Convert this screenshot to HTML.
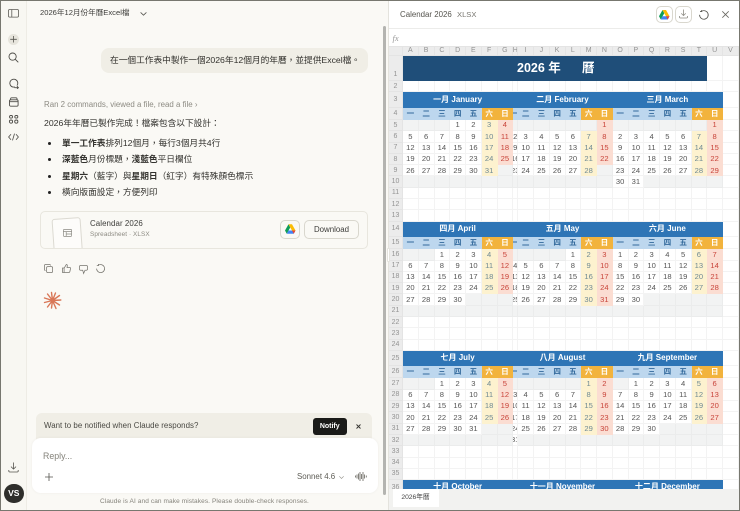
<!DOCTYPE html>
<html lang="zh-Hant"><head><meta charset="utf-8"><title>Calendar 2026</title>
<style>
*{box-sizing:border-box}
html,body{margin:0;padding:0}
body{width:740px;height:511px;overflow:hidden;position:relative;background:#faf9f5;font-family:"Liberation Sans","Noto Sans CJK TC",sans-serif;color:#3d3d3a}
.a{position:absolute;white-space:nowrap}
svg{position:absolute;overflow:visible}
#side{position:absolute;left:0;top:0;width:27px;height:511px;background:#f8f7f2;border-right:1px solid #eeece5}
.li{font-size:8.7px;line-height:12px;color:#33322e}
.li b{font-weight:700}
.dot{position:absolute;left:48px;width:3px;height:3px;border-radius:50%;background:#222}
.btn{position:absolute;border:1px solid #d9d7ce;border-radius:5px;background:#faf9f5}
#rp{position:absolute;left:389px;top:0;width:351px;height:511px;background:#fff}
#g{position:absolute;left:389px;top:46.7px;width:350px;height:443px;overflow:hidden;display:grid;
grid-template-columns:14px repeat(7,15.76px) 5px repeat(13,15.76px) 1fr;
grid-template-rows:9.3px 25px 11.5px 15.8px 11.7px repeat(9,11.3px) 15.4px 12.2px repeat(9,11.3px) 15.4px 12.2px repeat(9,11.3px) 15.4px;
font-size:7.6px;color:#555;background:#fff}
#g i{font-style:normal;display:flex;align-items:center;justify-content:center;overflow:hidden;border-right:1px solid #f3f3f3;border-bottom:1px solid #f3f3f3;white-space:nowrap;min-width:0;line-height:1}
#g i.r{background:#ececec;color:#939393;font-size:7px;border-color:#e4e4e4}
#g i.e{background:#f2f3f3;border-color:#ebecec}
#g i.s{background:#fdf2cf;color:#6f8a93;border-color:#fdf2cf}
#g i.u{background:#fbddd2;color:#c8443a;border-color:#fbddd2}
#g i.w{background:#bdd7ee;color:#336a9c;font-weight:700;border-color:#bdd7ee}
#g i.o{background:#f2b33d;color:#fff;font-weight:700;border-color:#f2b33d}
#g i.m{grid-column:span 7;background:#2e75b6;color:#fff;font-weight:700;font-size:8px;border-color:#2e75b6}
#g i.t{grid-column:span 20;background:#1f4e79;border-color:#1f4e79;position:relative;color:#fff;font-weight:700;font-size:12.5px}
</style></head><body>

<div id="side"></div>
<div style="position:absolute;left:0;top:0;width:740px;height:511px;border:1px solid #77776f;z-index:50;pointer-events:none"></div>

<!-- sidebar icons -->
<svg style="left:8px;top:9px" width="11" height="9" viewBox="0 0 11 9" fill="none" stroke="#5c5b55" stroke-width=".8"><rect x=".5" y=".5" width="10" height="7.6" rx="1.2"/><path d="M3.8.5v7.6"/></svg>
<div style="position:absolute;left:8px;top:33.5px;width:11px;height:11px;border-radius:50%;background:#e6e4dc"></div>
<svg style="left:10px;top:36px" width="7" height="7" viewBox="0 0 7 7" stroke="#55544e" stroke-width=".8"><path d="M3.5 0v6.5M.2 3.3h6.6"/></svg>
<svg style="left:8px;top:52px" width="11" height="11" viewBox="0 0 11 11" fill="none" stroke="#4d4c47" stroke-width=".9"><circle cx="4.6" cy="4.6" r="3.6"/><path d="M7.3 7.3l3 3"/></svg>
<svg style="left:8px;top:78px" width="11" height="11" viewBox="0 0 11 11" fill="none" stroke="#4d4c47" stroke-width=".9"><path d="M9 7.600A4 4 0 1 0 5 9.100h2"/><path d="M6.500 9.700h3.800M9 8.200l1.400 1.500L9 10.800"/></svg>
<svg style="left:9px;top:97px" width="10" height="10" viewBox="0 0 10 10" fill="none" stroke="#4d4c47" stroke-width=".9"><rect x=".5" y="2.800" width="8.600" height="6.400" rx="1.200"/><path d="M1.600 2.800V1.800q0-1 1-1h4.400q1 0 1 1v1M.5 4.700h8.600"/></svg>
<svg style="left:9px;top:115px" width="10" height="9" viewBox="0 0 10 9" fill="none" stroke="#4d4c47" stroke-width=".9"><rect x=".5" y=".5" width="3" height="2.600" rx="1.200"/><rect x="5.800" y=".5" width="3" height="2.600" rx="1.200"/><circle cx="2" cy="6.600" r="1.600"/><circle cx="7.300" cy="6.600" r="1.600"/></svg>
<svg style="left:8px;top:133px" width="11" height="8" viewBox="0 0 11 8" fill="none" stroke="#4d4c47" stroke-width=".8"><path d="M3 1.200L.6 4 3 6.800M8 1.200L10.400 4 8 6.800M6.500.6L4.500 7.400"/></svg>
<svg style="left:8px;top:462px" width="11" height="11" viewBox="0 0 11 11" fill="none" stroke="#55544e" stroke-width=".8"><path d="M5.500.5v6.400M3 4.600l2.500 2.500L8 4.600M.8 8v1q0 1 1 1h7.400q1 0 1-1V8"/></svg>
<div style="position:absolute;left:4px;top:483.500px;width:19.500px;height:19.500px;border-radius:50%;background:#2e2e2b;color:#fff;font-size:8.500px;font-weight:700;text-align:center;line-height:19.500px">VS</div>

<!-- title -->
<div class="a" style="left:40px;top:7px;font-size:7.600px;line-height:12px;color:#3d3d3a">2026年12月份年曆Excel檔</div>
<svg style="left:139.500px;top:11.500px" width="7" height="4" viewBox="0 0 7 4" fill="none" stroke="#55544e" stroke-width=".8"><path d="M.6.4L3.500 3.200 6.400.4"/></svg>

<!-- user bubble -->
<div style="position:absolute;left:101px;top:48px;width:267px;height:24.500px;background:#f0eee6;border-radius:8px"></div>
<div class="a" style="left:110px;top:54px;font-size:8.700px;line-height:12px;color:#33322e">在一個工作表中製作一個2026年12個月的年曆，並提供Excel檔。</div>

<div class="a" style="left:44px;top:98.500px;font-size:7.900px;line-height:12px;color:#8d8b83">Ran 2 commands, viewed a file, read a file ›</div>
<div class="a li" style="left:44px;top:117px">2026年年曆已製作完成！檔案包含以下設計：</div>
<div class="dot" style="top:141.500px"></div><div class="a li" style="left:62px;top:137px"><b>單一工作表</b>排列12個月，每行3個月共4行</div>
<div class="dot" style="top:157.500px"></div><div class="a li" style="left:62px;top:153px"><b>深藍色</b>月份標題，<b>淺藍色</b>平日欄位</div>
<div class="dot" style="top:174.500px"></div><div class="a li" style="left:62px;top:170px"><b>星期六</b>（藍字）與<b>星期日</b>（紅字）有特殊顏色標示</div>
<div class="dot" style="top:190.500px"></div><div class="a li" style="left:62px;top:186px">橫向版面設定，方便列印</div>

<!-- file card -->
<div style="position:absolute;left:40px;top:210.500px;width:328px;height:38px;border:1px solid #e8e6de;border-radius:5px;overflow:hidden;background:#faf9f5">
<div style="position:absolute;left:12px;top:6px;width:29px;height:44px;background:#fdfcfa;border:1px solid #dcdad2;border-radius:3px;transform:rotate(-4deg)"></div>
<svg style="left:22px;top:17px" width="9" height="8" viewBox="0 0 9 8" fill="none" stroke="#8b8a83" stroke-width=".7"><rect x=".4" y=".4" width="8.200" height="7" rx=".8"/><path d="M.4 2.600h8.200M3.200 2.600v4.800M3.200 5h5.400"/></svg>
</div>
<div class="a" style="left:90px;top:218px;font-size:7.900px;line-height:11px;letter-spacing:.08px;color:#3d3d3a">Calendar 2026</div>
<div class="a" style="left:90px;top:229.500px;font-size:6.400px;line-height:10px;letter-spacing:.08px;color:#8d8b83">Spreadsheet · XLSX</div>
<div class="btn" style="left:280px;top:219.500px;width:20px;height:19.500px"></div>
<svg style="left:285px;top:224px" width="10.500" height="10" viewBox="0 0 21 19"><path d="M7 0L0 12.500 3.500 19l7-12.500z" fill="#0f9d58"/><path d="M7 0h7l7 12.500h-7L10.500 6.500z" fill="#fbbc05"/><path d="M3.500 19h14L21 12.500H7z" fill="#4285f4"/><path d="M14 12.500h7L17.500 19z" fill="#ea4335"/></svg>
<div class="btn" style="left:304px;top:219.500px;width:55px;height:19.500px;text-align:center;font-size:7.900px;line-height:17.500px;color:#3d3d3a">Download</div>

<!-- actions -->
<svg style="left:44px;top:264px" width="9" height="9" viewBox="0 0 9 9" fill="none" stroke="#77766f" stroke-width=".75"><rect x="2.600" y="2.600" width="6" height="6" rx="1.200"/><path d="M6.500 1.500q0-1-1-1H1.500q-1 0-1 1v4q0 1 1 1"/></svg>
<svg style="left:61.500px;top:264px" width="9" height="9" viewBox="0 0 9 9" fill="none" stroke="#77766f" stroke-width=".75"><path d="M.5 4h1.600v4.500H.5zM2.100 4.200L4.300.5q1.200 0 1 1.400L5 3.500h2.700q1 0 .8 1L7.900 7.500q-.2 1-1.200 1H2.100"/></svg>
<svg style="left:79px;top:265px" width="9" height="9" viewBox="0 0 9 9" fill="none" stroke="#77766f" stroke-width=".75"><path d="M1.500.5h5.800q1.200 0 1.200 1.200v2.300q0 1.200-1.200 1.200H6L4.600 8.500 3.700 5.200H1.500Q.5 5.200.5 4V1.700Q.5.500 1.500.500z"/></svg>
<svg style="left:96px;top:264px" width="9" height="9" viewBox="0 0 9 9" fill="none" stroke="#77766f" stroke-width=".75"><path d="M2.300 1.300A4 4 0 1 1 .6 4.600M2.400 0v1.600H.8"/></svg>

<!-- spark -->
<svg style="left:44px;top:292px" width="17" height="17" viewBox="-8.500 -8.500 17 17" stroke="#d97757" stroke-width="1.400" stroke-linecap="round"><path d="M0 0L-1-8M0 0L3-7.500M0 0L7-5M0 0L8.300-.5M0 0L7 4.500M0 0L3.500 8M0 0L-1 7.500M0 0L-5 6.500M0 0L-8 2M0 0L-8-2.500M0 0L-5-6.500"/></svg>

<!-- notify -->
<div style="position:absolute;left:36px;top:413px;width:336px;height:32px;background:#f0eee6;border-radius:6px 6px 0 0"></div>
<div class="a" style="left:44px;top:420px;font-size:7.900px;line-height:12px;letter-spacing:.04px;color:#4a4943">Want to be notified when Claude responds?</div>
<div style="position:absolute;left:312.500px;top:417.500px;width:34.500px;height:17.500px;background:#1a1a18;border-radius:3px;color:#fff;font-size:7px;font-weight:700;text-align:center;line-height:17px">Notify</div>
<svg style="left:356px;top:424px" width="5" height="5" viewBox="0 0 5 5" stroke="#33322e" stroke-width=".9"><path d="M.5.500l4 4M4.500.500l-4 4"/></svg>

<!-- input -->
<div style="position:absolute;left:32px;top:438px;width:346px;height:55px;background:#fff;border-radius:9px;box-shadow:0 0 3px rgba(0,0,0,.05)"></div>
<div class="a" style="left:43px;top:449.500px;font-size:8.800px;line-height:12px;color:#85837b">Reply...</div>
<svg style="left:45px;top:472.500px" width="8" height="8" viewBox="0 0 8 8" stroke="#55544e" stroke-width=".8"><path d="M4 0v8M0 4h8"/></svg>
<div class="a" style="left:297px;top:470.500px;font-size:7.900px;line-height:12px;color:#5e5d56">Sonnet 4.6</div>
<svg style="left:338.500px;top:475.500px" width="5" height="3" viewBox="0 0 5 3" fill="none" stroke="#8d8b83" stroke-width=".6"><path d="M.3.300L2.500 2.500 4.700.300"/></svg>
<svg style="left:355px;top:472px" width="12" height="9" viewBox="0 0 12 9" stroke="#77766f" stroke-width=".9"><path d="M.5 3.500v2M2 2.500v4M3.500 1.500v6M5 0v9M6.500 2v5M8 0v9M9.500 2.500v4M11.300 3.500v2"/></svg>
<div class="a" style="left:100px;top:496.500px;font-size:6.500px;line-height:10px;letter-spacing:.1px;color:#85837b">Claude is AI and can make mistakes. Please double-check responses.</div>

<!-- scrollbar -->
<div style="position:absolute;left:383px;top:26px;width:3px;height:469px;background:#b4b4b0;border-radius:2px"></div>

<!-- right panel -->
<div id="rp"></div>
<div style="position:absolute;left:388px;top:0;width:1px;height:511px;background:#e4e3dd"></div>
<div style="position:absolute;left:389px;top:28px;width:351px;height:1px;background:#ececea"></div>
<div style="position:absolute;left:389px;top:46px;width:351px;height:1px;background:#e4e4e4"></div>
<div class="a" style="left:400px;top:8.500px;font-size:7.900px;line-height:11px;color:#55544e">Calendar 2026</div>
<div class="a" style="left:457px;top:8.500px;font-size:7.600px;line-height:11px;color:#77766f">XLSX</div>
<div class="btn" style="left:655.500px;top:5.500px;width:17px;height:17.500px;background:#fff"></div>
<svg style="left:659px;top:10px" width="10.500" height="9.500" viewBox="0 0 21 19"><path d="M7 0L0 12.500 3.500 19l7-12.500z" fill="#0f9d58"/><path d="M7 0h7l7 12.500h-7L10.500 6.500z" fill="#fbbc05"/><path d="M3.500 19h14L21 12.500H7z" fill="#4285f4"/><path d="M14 12.500h7L17.500 19z" fill="#ea4335"/></svg>
<div class="btn" style="left:674.500px;top:5.500px;width:17px;height:17.500px;background:#fff"></div>
<svg style="left:678.500px;top:9px" width="9" height="10" viewBox="0 0 9 10" fill="none" stroke="#8d8b83" stroke-width=".8"><path d="M4.500.5v6M2.300 4.400l2.200 2.200 2.200-2.200M.5 7v1q0 1 1 1h6q1 0 1-1V7"/></svg>
<svg style="left:699px;top:9.500px" width="9.500" height="9.500" viewBox="0 0 9.500 9.500" fill="none" stroke="#55544e" stroke-width=".85"><path d="M2.600 1.300A4.300 4.300 0 1 1 .6 4.800M2.700 0v1.600H1"/></svg>
<svg style="left:721.500px;top:11px" width="7" height="7" viewBox="0 0 7 7" stroke="#66655f" stroke-width=".75"><path d="M.3.300l6.400 6.400M6.700.300L.3 6.700"/></svg>
<div class="a" style="left:392.500px;top:33px;font-size:8.500px;line-height:10px;font-style:italic;font-family:'Liberation Serif',serif;color:#999">fx</div>

<div id="g">
<i class="r"></i><i class="r">A</i><i class="r">B</i><i class="r">C</i><i class="r">D</i><i class="r">E</i><i class="r">F</i><i class="r">G</i><i class="r">H</i><i class="r">I</i><i class="r">J</i><i class="r">K</i><i class="r">L</i><i class="r">M</i><i class="r">N</i><i class="r">O</i><i class="r">P</i><i class="r">Q</i><i class="r">R</i><i class="r">S</i><i class="r">T</i><i class="r">U</i><i class="r">V</i>
<i class="r" style="align-items:flex-end;padding-bottom:2px">1</i><i class="t"><span class="a" style="left:114px;top:5px;line-height:15px">2026 年</span><span class="a" style="left:179px;top:5px;line-height:15px">曆</span></i><i></i><i></i>
<i class="r">2</i><i></i><i></i><i></i><i></i><i></i><i></i><i></i><i></i><i></i><i></i><i></i><i></i><i></i><i></i><i></i><i></i><i></i><i></i><i></i><i></i><i></i><i></i>
<i class="r">3</i><i class="m">一月 January</i><i class="m">二月 February</i><i class="m">三月 March</i><i></i>
<i class="r">4</i><i class="w">一</i><i class="w">二</i><i class="w">三</i><i class="w">四</i><i class="w">五</i><i class="o">六</i><i class="o">日</i><i class="w">一</i><i class="w">二</i><i class="w">三</i><i class="w">四</i><i class="w">五</i><i class="o">六</i><i class="o">日</i><i class="w">一</i><i class="w">二</i><i class="w">三</i><i class="w">四</i><i class="w">五</i><i class="o">六</i><i class="o">日</i><i></i>
<i class="r">5</i><i class="e"></i><i class="e"></i><i class="e"></i><i>1</i><i>2</i><i class="s">3</i><i class="u">4</i><i class="e"></i><i class="e"></i><i class="e"></i><i class="e"></i><i class="e"></i><i class="e"></i><i class="u">1</i><i class="e"></i><i class="e"></i><i class="e"></i><i class="e"></i><i class="e"></i><i class="e"></i><i class="u">1</i><i></i>
<i class="r">6</i><i>5</i><i>6</i><i>7</i><i>8</i><i>9</i><i class="s">10</i><i class="u">11</i><i>2</i><i>3</i><i>4</i><i>5</i><i>6</i><i class="s">7</i><i class="u">8</i><i>2</i><i>3</i><i>4</i><i>5</i><i>6</i><i class="s">7</i><i class="u">8</i><i></i>
<i class="r">7</i><i>12</i><i>13</i><i>14</i><i>15</i><i>16</i><i class="s">17</i><i class="u">18</i><i>9</i><i>10</i><i>11</i><i>12</i><i>13</i><i class="s">14</i><i class="u">15</i><i>9</i><i>10</i><i>11</i><i>12</i><i>13</i><i class="s">14</i><i class="u">15</i><i></i>
<i class="r">8</i><i>19</i><i>20</i><i>21</i><i>22</i><i>23</i><i class="s">24</i><i class="u">25</i><i>16</i><i>17</i><i>18</i><i>19</i><i>20</i><i class="s">21</i><i class="u">22</i><i>16</i><i>17</i><i>18</i><i>19</i><i>20</i><i class="s">21</i><i class="u">22</i><i></i>
<i class="r">9</i><i>26</i><i>27</i><i>28</i><i>29</i><i>30</i><i class="s">31</i><i class="e"></i><i>23</i><i>24</i><i>25</i><i>26</i><i>27</i><i class="s">28</i><i class="e"></i><i>23</i><i>24</i><i>25</i><i>26</i><i>27</i><i class="s">28</i><i class="u">29</i><i></i>
<i class="r">10</i><i class="e"></i><i class="e"></i><i class="e"></i><i class="e"></i><i class="e"></i><i class="e"></i><i class="e"></i><i class="e"></i><i class="e"></i><i class="e"></i><i class="e"></i><i class="e"></i><i class="e"></i><i class="e"></i><i>30</i><i>31</i><i class="e"></i><i class="e"></i><i class="e"></i><i class="e"></i><i class="e"></i><i></i>
<i class="r">11</i><i></i><i></i><i></i><i></i><i></i><i></i><i></i><i></i><i></i><i></i><i></i><i></i><i></i><i></i><i></i><i></i><i></i><i></i><i></i><i></i><i></i><i></i>
<i class="r">12</i><i></i><i></i><i></i><i></i><i></i><i></i><i></i><i></i><i></i><i></i><i></i><i></i><i></i><i></i><i></i><i></i><i></i><i></i><i></i><i></i><i></i><i></i>
<i class="r">13</i><i></i><i></i><i></i><i></i><i></i><i></i><i></i><i></i><i></i><i></i><i></i><i></i><i></i><i></i><i></i><i></i><i></i><i></i><i></i><i></i><i></i><i></i>
<i class="r">14</i><i class="m">四月 April</i><i class="m">五月 May</i><i class="m">六月 June</i><i></i>
<i class="r">15</i><i class="w">一</i><i class="w">二</i><i class="w">三</i><i class="w">四</i><i class="w">五</i><i class="o">六</i><i class="o">日</i><i class="w">一</i><i class="w">二</i><i class="w">三</i><i class="w">四</i><i class="w">五</i><i class="o">六</i><i class="o">日</i><i class="w">一</i><i class="w">二</i><i class="w">三</i><i class="w">四</i><i class="w">五</i><i class="o">六</i><i class="o">日</i><i></i>
<i class="r">16</i><i class="e"></i><i class="e"></i><i>1</i><i>2</i><i>3</i><i class="s">4</i><i class="u">5</i><i class="e"></i><i class="e"></i><i class="e"></i><i class="e"></i><i>1</i><i class="s">2</i><i class="u">3</i><i>1</i><i>2</i><i>3</i><i>4</i><i>5</i><i class="s">6</i><i class="u">7</i><i></i>
<i class="r">17</i><i>6</i><i>7</i><i>8</i><i>9</i><i>10</i><i class="s">11</i><i class="u">12</i><i>4</i><i>5</i><i>6</i><i>7</i><i>8</i><i class="s">9</i><i class="u">10</i><i>8</i><i>9</i><i>10</i><i>11</i><i>12</i><i class="s">13</i><i class="u">14</i><i></i>
<i class="r">18</i><i>13</i><i>14</i><i>15</i><i>16</i><i>17</i><i class="s">18</i><i class="u">19</i><i>11</i><i>12</i><i>13</i><i>14</i><i>15</i><i class="s">16</i><i class="u">17</i><i>15</i><i>16</i><i>17</i><i>18</i><i>19</i><i class="s">20</i><i class="u">21</i><i></i>
<i class="r">19</i><i>20</i><i>21</i><i>22</i><i>23</i><i>24</i><i class="s">25</i><i class="u">26</i><i>18</i><i>19</i><i>20</i><i>21</i><i>22</i><i class="s">23</i><i class="u">24</i><i>22</i><i>23</i><i>24</i><i>25</i><i>26</i><i class="s">27</i><i class="u">28</i><i></i>
<i class="r">20</i><i>27</i><i>28</i><i>29</i><i>30</i><i class="e"></i><i class="e"></i><i class="e"></i><i>25</i><i>26</i><i>27</i><i>28</i><i>29</i><i class="s">30</i><i class="u">31</i><i>29</i><i>30</i><i class="e"></i><i class="e"></i><i class="e"></i><i class="e"></i><i class="e"></i><i></i>
<i class="r">21</i><i class="e"></i><i class="e"></i><i class="e"></i><i class="e"></i><i class="e"></i><i class="e"></i><i class="e"></i><i class="e"></i><i class="e"></i><i class="e"></i><i class="e"></i><i class="e"></i><i class="e"></i><i class="e"></i><i class="e"></i><i class="e"></i><i class="e"></i><i class="e"></i><i class="e"></i><i class="e"></i><i class="e"></i><i></i>
<i class="r">22</i><i></i><i></i><i></i><i></i><i></i><i></i><i></i><i></i><i></i><i></i><i></i><i></i><i></i><i></i><i></i><i></i><i></i><i></i><i></i><i></i><i></i><i></i>
<i class="r">23</i><i></i><i></i><i></i><i></i><i></i><i></i><i></i><i></i><i></i><i></i><i></i><i></i><i></i><i></i><i></i><i></i><i></i><i></i><i></i><i></i><i></i><i></i>
<i class="r">24</i><i></i><i></i><i></i><i></i><i></i><i></i><i></i><i></i><i></i><i></i><i></i><i></i><i></i><i></i><i></i><i></i><i></i><i></i><i></i><i></i><i></i><i></i>
<i class="r">25</i><i class="m">七月 July</i><i class="m">八月 August</i><i class="m">九月 September</i><i></i>
<i class="r">26</i><i class="w">一</i><i class="w">二</i><i class="w">三</i><i class="w">四</i><i class="w">五</i><i class="o">六</i><i class="o">日</i><i class="w">一</i><i class="w">二</i><i class="w">三</i><i class="w">四</i><i class="w">五</i><i class="o">六</i><i class="o">日</i><i class="w">一</i><i class="w">二</i><i class="w">三</i><i class="w">四</i><i class="w">五</i><i class="o">六</i><i class="o">日</i><i></i>
<i class="r">27</i><i class="e"></i><i class="e"></i><i>1</i><i>2</i><i>3</i><i class="s">4</i><i class="u">5</i><i class="e"></i><i class="e"></i><i class="e"></i><i class="e"></i><i class="e"></i><i class="s">1</i><i class="u">2</i><i class="e"></i><i>1</i><i>2</i><i>3</i><i>4</i><i class="s">5</i><i class="u">6</i><i></i>
<i class="r">28</i><i>6</i><i>7</i><i>8</i><i>9</i><i>10</i><i class="s">11</i><i class="u">12</i><i>3</i><i>4</i><i>5</i><i>6</i><i>7</i><i class="s">8</i><i class="u">9</i><i>7</i><i>8</i><i>9</i><i>10</i><i>11</i><i class="s">12</i><i class="u">13</i><i></i>
<i class="r">29</i><i>13</i><i>14</i><i>15</i><i>16</i><i>17</i><i class="s">18</i><i class="u">19</i><i>10</i><i>11</i><i>12</i><i>13</i><i>14</i><i class="s">15</i><i class="u">16</i><i>14</i><i>15</i><i>16</i><i>17</i><i>18</i><i class="s">19</i><i class="u">20</i><i></i>
<i class="r">30</i><i>20</i><i>21</i><i>22</i><i>23</i><i>24</i><i class="s">25</i><i class="u">26</i><i>17</i><i>18</i><i>19</i><i>20</i><i>21</i><i class="s">22</i><i class="u">23</i><i>21</i><i>22</i><i>23</i><i>24</i><i>25</i><i class="s">26</i><i class="u">27</i><i></i>
<i class="r">31</i><i>27</i><i>28</i><i>29</i><i>30</i><i>31</i><i class="e"></i><i class="e"></i><i>24</i><i>25</i><i>26</i><i>27</i><i>28</i><i class="s">29</i><i class="u">30</i><i>28</i><i>29</i><i>30</i><i class="e"></i><i class="e"></i><i class="e"></i><i class="e"></i><i></i>
<i class="r">32</i><i class="e"></i><i class="e"></i><i class="e"></i><i class="e"></i><i class="e"></i><i class="e"></i><i class="e"></i><i>31</i><i class="e"></i><i class="e"></i><i class="e"></i><i class="e"></i><i class="e"></i><i class="e"></i><i class="e"></i><i class="e"></i><i class="e"></i><i class="e"></i><i class="e"></i><i class="e"></i><i class="e"></i><i></i>
<i class="r">33</i><i></i><i></i><i></i><i></i><i></i><i></i><i></i><i></i><i></i><i></i><i></i><i></i><i></i><i></i><i></i><i></i><i></i><i></i><i></i><i></i><i></i><i></i>
<i class="r">34</i><i></i><i></i><i></i><i></i><i></i><i></i><i></i><i></i><i></i><i></i><i></i><i></i><i></i><i></i><i></i><i></i><i></i><i></i><i></i><i></i><i></i><i></i>
<i class="r">35</i><i></i><i></i><i></i><i></i><i></i><i></i><i></i><i></i><i></i><i></i><i></i><i></i><i></i><i></i><i></i><i></i><i></i><i></i><i></i><i></i><i></i><i></i>
<i class="r">36</i><i class="m">十月 October</i><i class="m">十一月 November</i><i class="m">十二月 December</i><i></i>
</div>

<!-- sheet tabs -->
<div style="position:absolute;left:389px;top:489.300px;width:351px;height:22px;background:#f2f2f0"></div>
<div style="position:absolute;left:392.500px;top:489.300px;width:46px;height:18px;background:#fff;text-align:center;font-size:6.700px;line-height:17px;color:#444">2026年曆</div>
<div style="position:absolute;left:387px;top:248px;width:3px;height:14px;background:#fff;border-radius:1px;border:1px solid #e4e3dd"></div>
</body></html>
